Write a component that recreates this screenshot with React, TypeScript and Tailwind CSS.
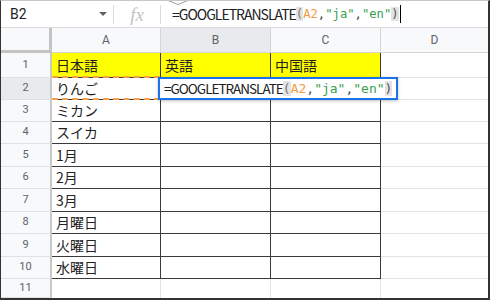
import React from "react";

type Row = {
  n: number;
  h: string;
  a: string;
  b?: string;
  c?: string;
  yellow?: boolean;
};

const rows: Row[] = [
  { n: 1, h: "h-[25px]", a: "日本語", b: "英語", c: "中国語", yellow: true },
  { n: 2, h: "h-[22px]", a: "りんご" },
  { n: 3, h: "h-[22px]", a: "ミカン" },
  { n: 4, h: "h-[22px]", a: "スイカ" },
  { n: 5, h: "h-[23px]", a: "1月" },
  { n: 6, h: "h-[22px]", a: "2月" },
  { n: 7, h: "h-[23px]", a: "3月" },
  { n: 8, h: "h-[22px]", a: "月曜日" },
  { n: 9, h: "h-[23px]", a: "火曜日" },
  { n: 10, h: "h-[22px]", a: "水曜日" },
];

const jp = "font-['Noto_Sans_CJK_JP',sans-serif]";

// the formula text, name part proportional and the arguments monospaced
const Formula = ({ big }: { big?: boolean }) => (
  <span className="whitespace-nowrap flex items-center">
    <span className={`${jp} text-[#202124] tracking-[-1px] ${big ? "text-[14px]" : "text-[13.5px]"}`}>
      =GOOGLETRANSLATE
    </span>
    <span
      className={`font-['DejaVu_Sans_Mono',monospace] text-[#444] ${big ? "text-[12.2px]" : "text-[13px]"}`}
    >
      <span className="bg-[#e3e3e3] text-[#777]">(</span>
      <span className="text-[#f39c45]">A2</span>,
      <span className="text-[#36a04f]">"ja"</span>,
      <span className="text-[#36a04f]">"en"</span>
      <span className="bg-[#e3e3e3] text-[#555]">)</span>
    </span>
  </span>
);

const FormulaBar = () => (
  <div className="flex items-center h-[27px] border-b border-[#dadce0] bg-white shrink-0">
    <div className="w-[112px] flex items-center justify-between pl-[9px] pr-[6px]">
      <span className="font-['Roboto',sans-serif] text-[14px] text-[#202124]">B2</span>
      <svg width="8" height="4" viewBox="0 0 8 4">
        <polygon points="0,0 8,0 4,4" fill="#5f6368" />
      </svg>
    </div>
    <div className="w-px h-[19px] bg-[#dadce0]" />
    <div className="w-[46px] flex items-center justify-center">
      <span className="font-['Liberation_Serif',serif] italic text-[19px] text-[#c4c4c4] leading-none">
        fx
      </span>
    </div>
    <div className="w-px h-[19px] bg-[#dadce0]" />
    <div className="pl-[11px] flex items-center">
      <Formula big />
      <span className="w-px h-[18px] bg-black ml-[1px]" />
    </div>
  </div>
);

const headCell = "flex items-center justify-center border-r border-b border-[#d5d5d5] text-[12px] text-[#5f6368] font-['Roboto',sans-serif]";

const ColumnHeader = () => (
  <div className="flex h-[25px] shrink-0">
    <div className="w-[51px] bg-[#f8f9fa] border-r-[3px] border-b-[3px] border-[#c4c4c4]" />
    <div className={`${headCell} w-[109px] bg-[#f8f9fa]`}>A</div>
    <div className={`${headCell} w-[110px] bg-[#e8eaed]`}>B</div>
    <div className={`${headCell} w-[110px] bg-[#f8f9fa]`}>C</div>
    <div className={`${headCell} flex-1 border-r-0 bg-[#f8f9fa]`}>D</div>
  </div>
);

const RowHead = ({ n, active }: { n: number; active?: boolean }) => (
  <div
    className={`w-[51px] shrink-0 flex items-center justify-center border-r-2 border-r-[#c8c8c8] border-b border-b-[#e0e0e0] text-[11px] text-[#5f6368] font-['Roboto',sans-serif] ${active ? "bg-[#e8eaed]" : "bg-[#f8f9fa]"}`}
  >
    {n}
  </div>
);

const dataCell = `flex items-center pl-[4px] border-r border-b border-[#3a3a3a] text-[14px] text-[#222] ${jp}`;

export default function App() {
  return (
    <div className="relative w-[490px] h-[300px] bg-white flex flex-col overflow-hidden border-l border-l-[#333] border-r-2 border-r-[#333] border-b-2 border-b-[#333] border-t border-t-[#c8c8c8]">
      <FormulaBar />
      <ColumnHeader />

      {rows.map((r) => (
        <div key={r.n} className={`flex shrink-0 ${r.h}`}>
          <RowHead n={r.n} active={r.n === 2} />
          <div className={`${dataCell} w-[109px] relative ${r.yellow ? "bg-[#ffff00]" : ""}`}>
            {r.a}
            {r.n === 2 && (
              <span className="absolute left-0 right-0 -top-[2px] -bottom-[1px] border-y-2 border-dashed border-[#f7a04a]" />
            )}
          </div>
          <div className={`${dataCell} w-[110px] ${r.yellow ? "bg-[#ffff00]" : ""}`}>{r.b}</div>
          <div className={`${dataCell} w-[110px] ${r.yellow ? "bg-[#ffff00]" : ""}`}>{r.c}</div>
          <div className="flex-1 border-b border-[#e2e2e2]" />
        </div>
      ))}

      {/* row 11 */}
      <div className="flex flex-1">
        <RowHead n={11} />
        <div className="w-[109px] border-r border-[#e2e2e2]" />
        <div className="w-[110px] border-r border-[#e2e2e2]" />
        <div className="w-[110px] border-r border-[#e2e2e2]" />
        <div className="flex-1" />
      </div>

      {/* cell editor over B2 */}
      <div className="absolute left-[157px] top-[76px] w-[240px] h-[23px] border-2 border-[#1a73e8] bg-white flex items-center pl-[4px] shadow-[0_1px_3px_rgba(0,0,0,0.25)]">
        <Formula />
      </div>

      {/* little notch at top edge */}
      <svg className="absolute left-[167px] -top-px" width="20" height="5" viewBox="0 0 20 5">
        <polyline points="0,0.5 10,4.5 20,0.5" fill="#fff" stroke="#9e9e9e" strokeWidth="1" />
      </svg>
    </div>
  );
}
